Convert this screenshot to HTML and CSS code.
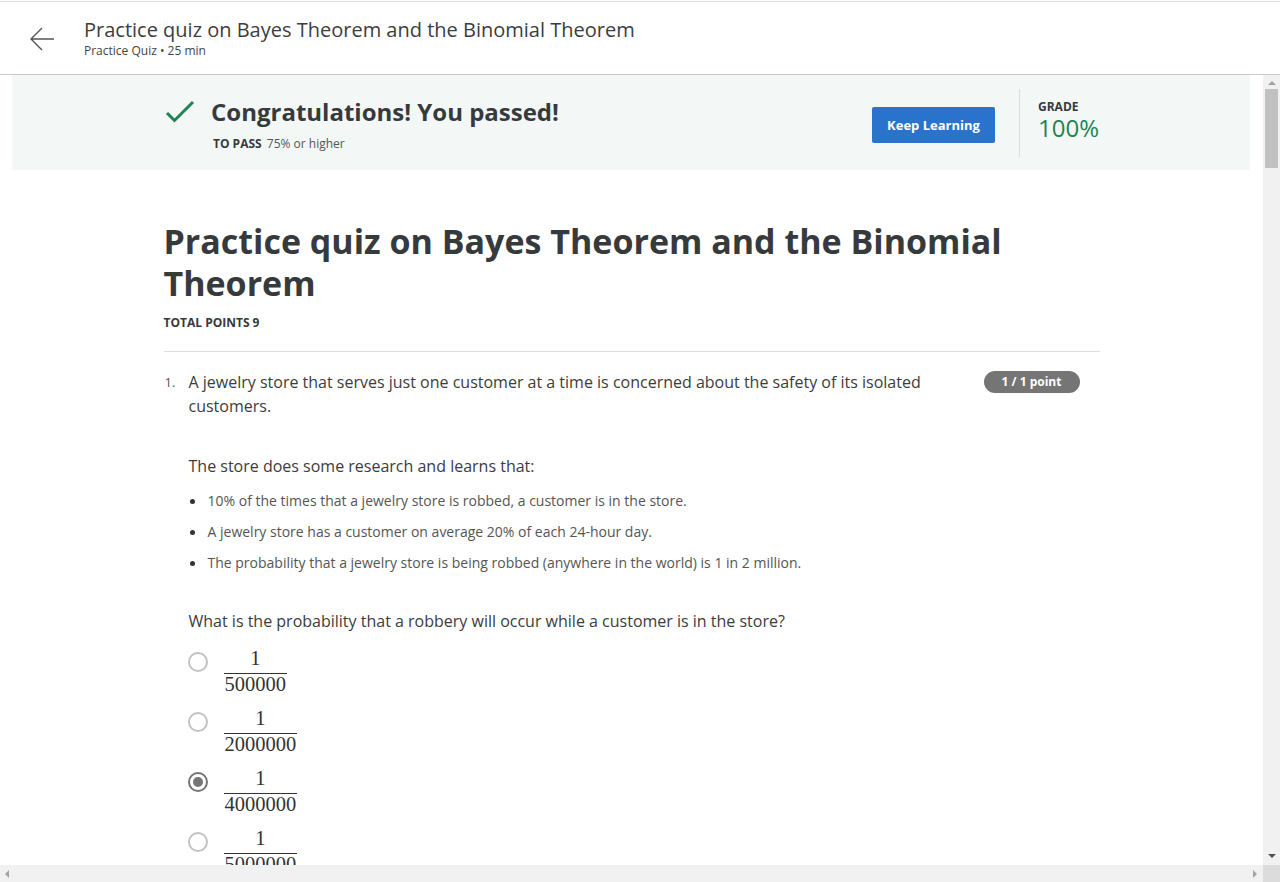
FILE: index.html
```html
<!DOCTYPE html>
<html lang="en">
<head>
<meta charset="utf-8">
<title>Practice quiz on Bayes Theorem and the Binomial Theorem</title>
<link rel="stylesheet" href="styles.css">
</head>
<body>
<div class="app">
  <header class="topbar">
    <button class="back" aria-label="Back">
      <svg width="28" height="28" viewBox="0 0 28 28"><path d="M26 14H3M14 3L3 14l11 11" fill="none" stroke="#555" stroke-width="1.4"/></svg>
    </button>
    <div class="topbar-text">
      <div class="topbar-title">Practice quiz on Bayes Theorem and the Binomial Theorem</div>
      <div class="topbar-sub">Practice Quiz • 25 min</div>
    </div>
  </header>
  <div class="viewport">
    <div class="scroll">
      <section class="banner">
        <div class="banner-inner">
          <div class="pass">
            <svg class="check" width="32" height="32" viewBox="0 0 32 32"><path d="M4 17l7.5 7.5L30 6" fill="none" stroke="#1f8354" stroke-width="3"/></svg>
            <div>
              <h2 class="pass-title">Congratulations! You passed!</h2>
              <p class="pass-req"><b>TO PASS</b> 75% or higher</p>
            </div>
          </div>
          <button class="keep">Keep Learning</button>
          <div class="vdiv"></div>
          <div class="grade">
            <div class="grade-label">GRADE</div>
            <div class="grade-value">100%</div>
          </div>
        </div>
      </section>
      <main class="content">
        <h1 class="quiz-title">Practice quiz on Bayes Theorem and the Binomial Theorem</h1>
        <div class="total">TOTAL POINTS 9</div>
        <hr class="rule">
        <div class="question">
          <div class="qnum">1.</div>
          <div class="qbody">
            <div class="qhead">
              <p class="qtext">A jewelry store that serves just one customer at a time is concerned about the safety of its isolated customers.</p>
              <span class="badge">1 / 1 point</span>
            </div>
            <p class="para">The store does some research and learns that:</p>
            <ul class="facts">
              <li>10% of the times that a jewelry store is robbed, a customer is in the store.</li>
              <li>A jewelry store has a customer on average 20% of each 24-hour day.</li>
              <li>The probability that a jewelry store is being robbed (anywhere in the world) is 1 in 2 million.</li>
            </ul>
            <p class="para ask">What is the probability that a robbery will occur while a customer is in the store?</p>
            <div class="options">
              <label class="opt"><span class="radio"></span><span class="frac"><span class="num">1</span><span class="den">500000</span></span></label>
              <label class="opt"><span class="radio"></span><span class="frac"><span class="num">1</span><span class="den">2000000</span></span></label>
              <label class="opt"><span class="radio on"></span><span class="frac"><span class="num">1</span><span class="den">4000000</span></span></label>
              <label class="opt"><span class="radio"></span><span class="frac"><span class="num">1</span><span class="den">5000000</span></span></label>
            </div>
          </div>
        </div>
      </main>
    </div>
    <div class="vbar">
      <span class="arr up"></span>
      <span class="thumb"></span>
      <span class="vspace"></span>
      <span class="arr down"></span>
    </div>
    <div class="hbar">
      <span class="arr left"></span>
      <span class="arr right"></span>
    </div>
    <div class="corner"></div>
  </div>
</div>
</body>
</html>
```
FILE: styles.css
```css
* { box-sizing: border-box; }
html, body { margin: 0; padding: 0; height: 100%; overflow: hidden; background: #fff; }
body { font-family: "Open Sans", "Noto Sans", sans-serif; color: #333; }
p, h1, h2, ul { margin: 0; padding: 0; }

.app { height: 882px; display: flex; flex-direction: column; }

.topbar {
  height: 74px;
  flex: none;
  margin-top: 1px;
  border-top: 1px solid #e2e2e2;
  border-bottom: 1px solid #c9c9c9;
  display: flex;
  align-items: center;
  padding-left: 28px;
}
.back { background: none; border: 0; padding: 0; width: 28px; height: 28px; margin-right: 28px; margin-top: 2px; }
.back svg { display: block; }
.topbar-title { font-size: 20px; line-height: 26px; color: #3d3d3d; }
.topbar-sub { font-size: 12px; line-height: 16px; color: #444; }

.viewport {
  flex: 1;
  display: grid;
  grid-template-columns: 1fr 17px;
  grid-template-rows: 1fr 17px;
  min-height: 0;
}
.scroll { overflow: hidden; min-height: 0; }

.banner { margin: 0 13px 0 12px; height: 95px; background: #f3f8f6; }
.banner-inner {
  max-width: 936px;
  margin: 0 auto;
  height: 100%;
  display: flex;
  align-items: center;
}
.pass { flex: 1; display: flex; align-items: flex-start; margin-top: 2px; }
.check { flex: none; margin: 0 16px 0 0; }
.pass-title { font-size: 24px; font-weight: 700; line-height: 32px; color: #373a3c; }
.pass-req { font-size: 12px; line-height: 16px; color: #555; margin: 8px 0 0 2px; }
.pass-req b { font-size: 12px; color: #373a3c; margin-right: 2px; }

.keep {
  width: 123px; height: 36px;
  background: #2a73cc; color: #fff;
  border: 0; border-radius: 2px;
  font-family: "Open Sans", sans-serif; font-size: 13px; font-weight: 700;
  margin-top: 5px;
}
.vdiv { width: 1px; height: 68px; background: #dcdcdc; margin: 0 18px 0 24px; }
.grade { width: 61px; margin-bottom: 5px; }
.grade-label { font-size: 12px; font-weight: 700; line-height: 16px; color: #373a3c; }
.grade-value { font-size: 24px; line-height: 26px; color: #1f8354; }

.content { max-width: 936px; margin: 0 auto; padding-top: 50px; }
.quiz-title { font-size: 34px; font-weight: 700; line-height: 42px; color: #373a3c; }
.total { font-size: 12px; font-weight: 700; line-height: 16px; color: #373a3c; margin-top: 11px; }
.rule { border: 0; border-top: 1px solid #dedede; margin: 20px 0 0; }

.question { display: flex; padding-top: 18px; }
.qnum { width: 25px; flex: none; font-size: 13px; line-height: 24px; color: #555; padding-left: 1px; }
.qbody { flex: 1; }
.qhead { display: flex; align-items: flex-start; }
.qtext { flex: 1; font-size: 16px; line-height: 24px; color: #3c3c3c; }
.badge {
  flex: none;
  width: 96px; height: 22px;
  margin: 1px 20px 0 20px;
  border-radius: 11px;
  background: #757575; color: #fff;
  font-size: 12px; font-weight: 700; line-height: 22px; text-align: center;
}
.para { font-size: 16px; line-height: 24px; color: #3c3c3c; margin-top: 36px; }
.facts { list-style: none; margin-top: 13px; }
.facts li { display: flex; align-items: center; font-size: 14px; line-height: 20px; color: #555; margin-bottom: 11px; }
.facts li::before { content: ""; width: 5px; height: 5px; border-radius: 50%; background: #333; margin: 0 13px 0 1px; flex: none; }
.ask { margin-top: 36px; }

.options { display: flex; flex-direction: column; gap: 14px; margin-top: 15px; }
.opt { display: flex; align-items: flex-start; }
.radio { width: 20px; height: 20px; border: 2px solid #c2c2c2; border-radius: 50%; margin: 4px 16px 0 -1px; flex: none; display: flex; align-items: center; justify-content: center; }
.radio.on { border-color: #757575; }
.radio.on::after { content: ""; width: 10px; height: 10px; border-radius: 50%; background: #757575; }
.frac { display: inline-flex; flex-direction: column; align-items: center; font-family: "Liberation Serif", "DejaVu Serif", serif; font-size: 20.5px; color: #333; }
.num { line-height: 20px; padding-bottom: 5px; border-bottom: 1.2px solid #333; align-self: stretch; text-align: center; padding-left: 1px; padding-right: 1px; }
.den { line-height: 20px; padding: 0 1px; }

.vbar { grid-column: 2; grid-row: 1; background: #f1f1f1; display: flex; flex-direction: column; align-items: center; }
.thumb { width: 13px; height: 79px; background: #c1c1c1; margin-top: 4px; }
.vspace { flex: 1; }
.hbar { grid-column: 1; grid-row: 2; background: #f1f1f1; display: flex; align-items: center; justify-content: space-between; padding: 0 6px 0 5px; }
.corner { grid-column: 2; grid-row: 2; background: #dcdcdc; }
.arr { width: 0; height: 0; border-style: solid; }
.up { border-width: 0 4px 4px 4px; border-color: transparent transparent #a3a3a3 transparent; margin-top: 6px; }
.down { border-width: 4px 4px 0 4px; border-color: #505050 transparent transparent transparent; margin-bottom: 7px; }
.left { border-width: 4px 4px 4px 0; border-color: transparent #a3a3a3 transparent transparent; }
.right { border-width: 4px 0 4px 4px; border-color: transparent transparent transparent #a3a3a3; }
```
